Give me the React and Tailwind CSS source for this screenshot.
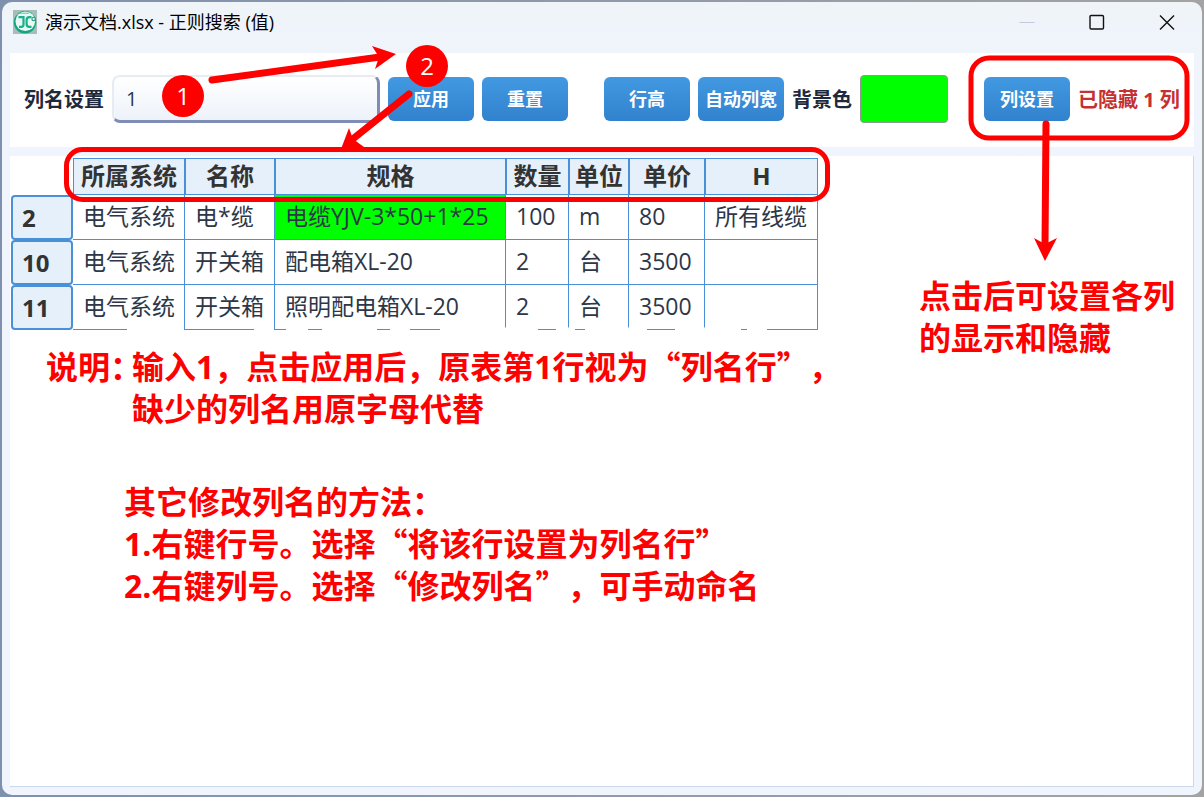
import React from "react";
import { clsx } from "clsx";

const columns = [
  { name: "所属系统", width: 112 },
  { name: "名称", width: 90 },
  { name: "规格", width: 231 },
  { name: "数量", width: 63 },
  { name: "单位", width: 60 },
  { name: "单价", width: 76 },
  { name: "H", width: 113 },
];

const rows = [
  { id: 2, cells: ["电气系统", "电*缆", "电缆YJV-3*50+1*25", "100", "m", "80", "所有线缆"] },
  { id: 10, cells: ["电气系统", "开关箱", "配电箱XL-20", "2", "台", "3500", ""] },
  { id: 11, cells: ["电气系统", "开关箱", "照明配电箱XL-20", "2", "台", "3500", ""] },
];

function AppLogo() {
  return (
    <svg viewBox="0 0 24 24" className="w-6 h-6" aria-hidden="true">
      <rect width="24" height="24" fill="#a9bdb8" />
      <circle cx="12" cy="12.3" r="11.2" fill="#14a683" />
      <circle cx="12.3" cy="11.3" r="9.8" fill="#e9f8f3" />
      <path d="M6 3.2h10" stroke="#5cc4a8" strokeWidth="1" />
      <g fill="none" stroke="#17b08a" strokeWidth="2.2">
        <path d="M5.5 7.1h5v7.4c0 1.6-1 2.3-2.4 2.3H6" />
        <path d="M18.5 7.1h-2c-1.8 0-2.9 1-2.9 2.8v4.1c0 1.8 1.1 2.8 2.9 2.8h2" />
      </g>
      <circle cx="20.6" cy="9" r="1.7" fill="#e9f8f3" stroke="#17a07e" strokeWidth="1.1" />
    </svg>
  );
}

function TitleBar() {
  return (
    <header className="flex h-10 items-center pl-[11px]">
      <AppLogo />
      <h1 className="ml-2 text-[18px] text-black">演示文档.xlsx - 正则搜索 (值)</h1>
      <div className="ml-auto flex h-full">
        <button className="flex w-[70px] items-center justify-center" aria-label="最小化" disabled>
          <svg viewBox="0 0 16 16" className="w-4 h-4" stroke="#c3cbd8" fill="none">
            <path d="M0.5 8.5h15" />
          </svg>
        </button>
        <button className="flex w-[70px] items-center justify-center" aria-label="最大化">
          <svg viewBox="0 0 16 16" className="w-4 h-4" stroke="#111" strokeWidth="1.4" fill="none">
            <rect x="1" y="1.5" width="13.5" height="13.5" rx="1.2" />
          </svg>
        </button>
        <button className="flex w-[70px] items-center justify-center" aria-label="关闭">
          <svg viewBox="0 0 16 16" className="w-4 h-4" stroke="#111" strokeWidth="1.4" fill="none">
            <path d="M1 1.5l14 14M15 1.5l-14 14" />
          </svg>
        </button>
      </div>
    </header>
  );
}

function ToolButton({ className, children }) {
  return (
    <button
      className={clsx(
        "h-11 w-[86px] shrink-0 rounded-md bg-linear-to-b from-[#4299e1] to-[#3182ce] text-[18px] font-bold whitespace-nowrap text-white",
        className
      )}
    >
      {children}
    </button>
  );
}

function Toolbar() {
  return (
    <section className="flex h-[94px] items-center gap-2 bg-white pb-0.5 pl-[14px] text-[20px] font-bold text-[#1e293b]">
      <label htmlFor="header-row" className="shrink-0 pt-0.5 whitespace-nowrap">列名设置</label>
      <input
        id="header-row"
        defaultValue="1"
        className="h-12 w-[268px] rounded-lg border-t-2 border-r-3 border-b-3 border-l-2 border-t-[#e6ebf4] border-r-[#7f8cb4] border-b-[#7f8cb4] border-l-[#e6ebf4] bg-linear-to-b from-white to-[#edf2fa] px-3 text-[20px] font-normal text-[#2d3748]"
      />
      <ToolButton>应用</ToolButton>
      <ToolButton>重置</ToolButton>
      <ToolButton className="ml-7">行高</ToolButton>
      <ToolButton>自动列宽</ToolButton>
      <span id="bg-label" className="shrink-0 pt-0.5 whitespace-nowrap">背景色</span>
      <button
        aria-labelledby="bg-label"
        className="h-12 w-[88px] shrink-0 rounded-sm border border-[#8f9a8f] bg-[#00ff00]"
      />
      <ToolButton className="ml-7">列设置</ToolButton>
      <span className="shrink-0 pt-0.5 whitespace-nowrap text-[#c53030]">已隐藏 1 列</span>
    </section>
  );
}

function ResultTable() {
  return (
    <table className="w-[807px] table-fixed border-separate border-spacing-0 text-[23px] leading-[30px] text-[#2d3748]">
      <colgroup>
        <col style={{ width: 62 }} />
        {columns.map(c => (
          <col key={c.name} style={{ width: c.width }} />
        ))}
      </colgroup>
      <thead>
        <tr className="h-[37px] text-[24px] text-[#333333]">
          <td />
          {columns.map(c => (
            <th key={c.name} scope="col" className="border border-[#4a90d9] bg-[#e6f0fa] p-0 pb-0.5 whitespace-nowrap">
              {c.name}
            </th>
          ))}
        </tr>
      </thead>
      <tbody>
        {rows.map(row => (
          <tr key={row.id} className="h-[45px]">
            <th
              scope="row"
              className="rounded-sm border-2 border-[#4a90d9] bg-[#e6f0fa] p-0 pl-[9px] text-left text-[24px] text-[#333333]"
            >
              {row.id}
            </th>
            {row.cells.map((cell, i) => (
              <td
                key={i}
                className={clsx(
                  "border-r border-b border-[#4a90d9] p-0 pb-0.5 pl-2.5 whitespace-nowrap",
                  cell.includes("YJV") && "bg-[#00ff00]"
                )}
              >
                {cell}
              </td>
            ))}
          </tr>
        ))}
      </tbody>
    </table>
  );
}

// full-width quotes need the CJK face
function Quoted({ children }) {
  return (
    <>
      <span className="font-['Noto_Sans_CJK_SC',sans-serif] leading-none">“</span>
      {children}
      <span className="font-['Noto_Sans_CJK_SC',sans-serif] leading-none">”</span>
    </>
  );
}

function Notes() {
  return (
    <div className="text-[32px] leading-[42px] font-bold whitespace-nowrap text-[#ff0000] [text-spacing-trim:space-all]">
      <div className="mt-4 flex pl-[35px]">
        <p className="w-[86px] shrink-0 [font-feature-settings:'halt']">说明：</p>
        <p>
          输入1，点击应用后，原表第1行视为<Quoted>列名行</Quoted>，
          <br />
          缺少的列名用原字母代替
        </p>
      </div>
      <div className="mt-[51px] pl-[113px]">
        <p>其它修改列名的方法：</p>
        <p>1.右键行号。选择<Quoted>将该行设置为列名行</Quoted></p>
        <p>2.右键列号。选择<Quoted>修改列名</Quoted>，可手动命名</p>
      </div>
    </div>
  );
}

function StepBadge({ className, children }) {
  return (
    <span
      className={clsx(
        "absolute flex h-[42px] w-[42px] items-center justify-center rounded-full bg-[#ff0000] text-[24px] text-white",
        className
      )}
    >
      {children}
    </span>
  );
}

function Markup() {
  return (
    <div className="pointer-events-none absolute top-0 left-0">
      <svg width="1204" height="797" fill="none" stroke="#ff0000" strokeLinecap="round">
        {/* wiped parts of the table's last line */}
        <path
          d="M127 329H184M254 329H274M286 329H308M322 329H377M390 329H410M440 329H538M556 329H575M585 329H647M675 329H741M747 329H767"
          stroke="#ffffff"
          strokeWidth="3"
          strokeLinecap="butt"
        />
        <rect x="66.5" y="149.5" width="761" height="50" rx="16" strokeWidth="5" />
        <rect x="971" y="58" width="216" height="80" rx="18" strokeWidth="5" />
        <path d="M212 80L380 57" strokeWidth="7" />
        <path d="M409 94L354 138" strokeWidth="7" />
        <path d="M1046 124L1045 246" strokeWidth="7" />
        <g fill="#ff0000" stroke="none">
          <path d="M396 54L372 46L379 57L375 69Z" />
          <path d="M341 149L349 128L353 139L364 147Z" />
          <path d="M1045 261L1034 238L1045 244L1057 238Z" />
        </g>
      </svg>
      <StepBadge className="top-[75px] left-[162px]">1</StepBadge>
      <StepBadge className="top-[45px] left-[406px]">2</StepBadge>
    </div>
  );
}

export default function App() {
  return (
    <div className="relative flex min-h-screen flex-col bg-linear-to-r from-[#7f90ae] to-[#a3a3a3] p-0.5 font-['Open_Sans','Noto_Sans_CJK_SC',sans-serif]">
      <div className="flex flex-1 flex-col rounded-[10px] bg-linear-to-b from-[#eff4f9] to-[#f0f4fd] to-10%">
        <TitleBar />
        <main className="flex flex-1 flex-col gap-[9px] px-2 pt-[11px] pb-2">
          <Toolbar />
          <section className="flex flex-1 border-r border-b border-[#cbd8ea] bg-white pt-0.5">
            <div className="w-[909px] shrink-0 pl-px">
              <ResultTable />
              <Notes />
            </div>
            <p className="mt-[117px] text-[32px] leading-[42px] font-bold whitespace-nowrap text-[#ff0000]">
              点击后可设置各列
              <br />
              的显示和隐藏
            </p>
          </section>
        </main>
      </div>
      <Markup />
    </div>
  );
}
